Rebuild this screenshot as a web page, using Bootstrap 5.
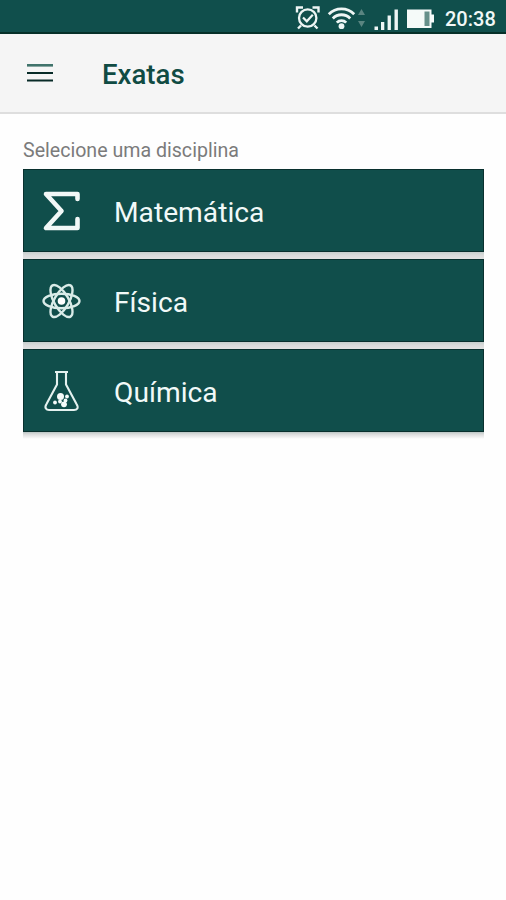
<!DOCTYPE html>
<html lang="pt-BR">
<head>
<meta charset="utf-8">
<meta name="viewport" content="width=device-width, initial-scale=1">
<title>Exatas</title>
<link href="https://cdn.jsdelivr.net/npm/bootstrap@5.3.0/dist/css/bootstrap.min.css" rel="stylesheet">
<style>
body { font-family: Roboto, "Liberation Sans", sans-serif; background: #fefefe; }
svg { display: block; flex: none; }
.status-bar { height: 34px; background: #104f4c; border-bottom: 2px solid #063029; padding-right: 11px; }
.status-clock { font-size: 20px; font-weight: 500; line-height: 34px; width: 50px; margin-left: 10px; padding-top: 5px; white-space: nowrap; color: #f2f8f7; }
.app-bar { height: 80px; background: #f5f5f5; border-bottom: 2px solid #dedede; padding: 0 0 0 26px; }
.menu-btn { line-height: 0; }
.app-title { font-size: 27.6px; font-weight: 500; line-height: 32px; color: #104b43; margin-left: 48px; padding-top: 4px; }
.page { padding: 25px 22px 0 23px; }
.hint { font-size: 19.6px; line-height: 24px; color: #7b7b7b; margin-bottom: 6px; }
.subject-row { padding-bottom: 7px; background: linear-gradient(to top, #e2e2e2, #d9dada 4px, #c6cfcd 7px); }
.subject-row:last-child { background: linear-gradient(to top, #fefefe, #d9dada 5px, #b9c6c4 7px); }
.subject { height: 83px; background: #104e4b; border: 1px solid #09302e; border-radius: 0; padding: 0 0 0 18px; color: #f1f9f8; font-size: 28.2px; line-height: 34px; gap: 32px; }
.subject span { padding-top: 4px; }
.subject:hover, .subject:focus { color: #fff; background: #104e4b; }
</style>
<script src="https://cdn.jsdelivr.net/npm/bootstrap@5.3.0/dist/js/bootstrap.bundle.min.js"></script>
</head>
<body>
<div class="status-bar d-flex align-items-center justify-content-end">
  <!-- alarm, wifi, data arrows, signal, battery -->
  <svg width="140" height="32" viewBox="295 0 140 32" fill="none" stroke="#eef6f5">
    <circle cx="307.700" cy="18" r="8.700" stroke-width="2.300"/>
    <path d="M303 17.500l3.800 3.800 6-6.500" stroke-width="2.200"/>
    <path d="M297 12.500v-5h6M318.500 12.500v-5h-6M301 25.500l-3 3M314.500 25.500l3 3" stroke-width="2.400"/>
    <path d="M328.800 14.300a17.500 17.500 0 0 1 25.400 0M332.800 18.500a12 12 0 0 1 17.400 0M336.800 22.600a6.500 6.500 0 0 1 9.400 0" stroke-width="2.800"/>
    <circle cx="341.500" cy="26.200" r="2.900" fill="#eef6f5" stroke="none"/>
    <path d="M358 15l3.500-6 3.500 6zM358 21l3.500 6 3.500-6z" fill="#5a8581" stroke="none"/>
    <path d="M374.500 26.500h3.500v3.500h-3.500zM381 22h3.300v8H381zM387.600 15.500h3.300V30h-3.300zM394.500 9.500h3.400V30h-3.400z" fill="#eef6f5" stroke="none"/>
    <path d="M407 9.500h24.500v5h2.500v8h-2.500v5.500H407z" fill="#f5faf9" stroke="none"/>
    <path d="M424.500 11.500h5v14.500h-5z" fill="#66908b" stroke="none"/>
  </svg>
  <div class="status-clock">20:38</div>
</div>
<header class="app-bar navbar flex-nowrap justify-content-start">
  <button class="menu-btn btn p-0 border-0" type="button" aria-label="Menu">
    <svg width="28" height="20" viewBox="0 0 28 20"><path d="M1 1h26v2.600H1z" fill="#40736b"/><path d="M1 9h26v2H1zM1 16.600h26v2H1z" fill="#082b28"/></svg>
  </button>
  <h1 class="app-title mb-0">Exatas</h1>
</header>
<main class="page">
  <p class="hint">Selecione uma disciplina</p>
  <div class="d-flex flex-column">
    <div class="subject-row">
      <a href="#" class="subject btn d-flex align-items-center">
        <svg width="40" height="42" viewBox="0 0 40 42" fill="none" stroke="#f2f8f7" stroke-width="4.600" stroke-linecap="round" stroke-linejoin="round"><path d="M35.500 9V4H4l15.500 17L4 38h31.500v-9"/></svg>
        <span>Matemática</span>
      </a>
    </div>
    <div class="subject-row">
      <a href="#" class="subject btn d-flex align-items-center">
        <svg width="40" height="42" viewBox="0 0 40 42" fill="none" stroke="#d9ebe8" stroke-width="2.400">
          <ellipse cx="19.500" cy="21" rx="18" ry="7.300"/>
          <ellipse cx="19.500" cy="21" rx="18" ry="7.300" transform="rotate(60 19.500 21)"/>
          <ellipse cx="19.500" cy="21" rx="18" ry="7.300" transform="rotate(120 19.500 21)"/>
          <circle cx="19.500" cy="21" r="4.600" fill="#fff" stroke="#104e4b" stroke-width="1.600"/>
        </svg>
        <span>Física</span>
      </a>
    </div>
    <div class="subject-row">
      <a href="#" class="subject btn d-flex align-items-center">
        <svg width="40" height="42" viewBox="0 0 40 42" fill="none" stroke="#e4f1ef" stroke-width="2.100" stroke-linejoin="round">
          <path d="M13 2h13M15 2v12.500L4.500 34c-2.500 4 0 6 2.500 6h25c3 0 5-2 2.500-6L24 14.500V2"/>
          <g fill="#f5fbfa" stroke="none"><circle cx="18.500" cy="26.500" r="3.500"/><circle cx="22" cy="34.300" r="2.900"/><circle cx="25" cy="26.500" r="1.900"/><circle cx="23.500" cy="30.500" r="1.900"/><circle cx="13" cy="32.500" r="1.900"/><circle cx="18" cy="31.500" r="1.900"/></g>
        </svg>
        <span>Química</span>
      </a>
    </div>
  </div>
</main>
</body>
</html>
